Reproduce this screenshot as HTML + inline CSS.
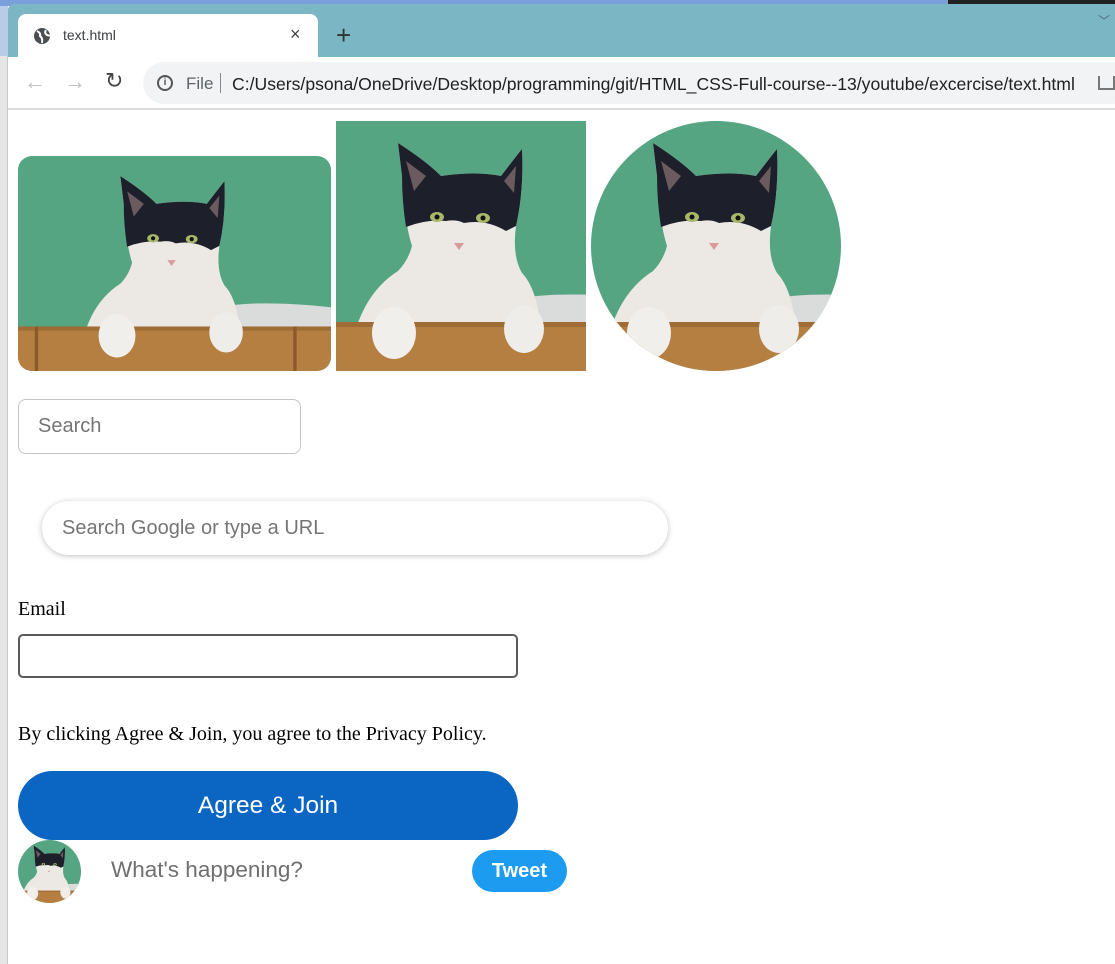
<!DOCTYPE html>
<html><head><meta charset="utf-8"><style>
*{margin:0;padding:0;box-sizing:border-box}
body{width:1115px;height:964px;position:relative;overflow:hidden;background:#fff;font-family:"Liberation Sans",sans-serif}
.a{position:absolute}
</style></head><body>
<svg width="0" height="0" style="position:absolute"><defs>
<g id="cat">
<rect x="-150" y="-50" width="550" height="350" fill="#55a583"/>
<path d="M180 178 Q230 168 330 180 L330 210 L180 210Z" fill="#d9dcda"/>
<path d="M12 250 Q18 178 62 150 Q72 140 76 125 Q68 100 66 55 L62 22 Q90 40 105 55 Q140 50 165 55 Q178 38 186 28 Q188 70 180 105 Q176 135 186 152 Q208 175 206 250Z" fill="#ece8e3"/>
<path d="M62 22 Q90 40 105 55 Q140 50 165 55 Q178 38 186 28 Q188 70 180 105 L170 110 Q150 98 128 102 Q120 98 110 100 Q90 98 70 106 Q66 80 66 55Z" fill="#1d1f2b"/>
<path d="M70 40 L90 55 L78 70Z M180 45 L168 60 L178 72Z" fill="#6b5a5e"/>
<ellipse cx="101" cy="96" rx="7" ry="5" fill="#a9b76a"/><circle cx="101" cy="96" r="2.5" fill="#111"/>
<ellipse cx="147" cy="97" rx="7" ry="5" fill="#a9b76a"/><circle cx="147" cy="97" r="2.5" fill="#111"/>
<path d="M118 122 L128 122 L123 129Z" fill="#d89a9a"/>
<rect x="-150" y="201" width="550" height="99" fill="#b57f42"/>
<rect x="-150" y="201" width="550" height="5" fill="#a06c36"/>
<rect x="-40" y="201" width="4" height="60" fill="#8a5a2a"/>
<rect x="268" y="201" width="4" height="60" fill="#8a5a2a"/>
<ellipse cx="58" cy="212" rx="22" ry="26" fill="#f1efec"/>
<ellipse cx="188" cy="208" rx="20" ry="24" fill="#efedea"/>
</g>
</defs></svg>

<!-- chrome -->
<div class="a" style="left:0;top:0;width:1115px;height:6px;background:#7b9fda"></div>
<div class="a" style="left:948px;top:0;width:167px;height:4px;background:#222"></div>
<div class="a" style="left:0;top:6px;width:8px;height:958px;background:#e6e6e6;border-right:1px solid #c8c8c8"></div>
<div class="a" style="left:0;top:6px;width:8px;height:50px;background:#b9cbe6"></div>
<div class="a" style="left:8px;top:4px;width:1107px;height:53px;background:#7ab6c3;border-top-left-radius:6px"></div>
<div class="a" style="left:18px;top:14px;width:300px;height:44px;background:#fff;border-radius:8px 8px 0 0"></div>
<svg class="a" style="left:33px;top:27px" width="18" height="18" viewBox="0 0 18 18"><circle cx="9" cy="9" r="8" fill="#4a4d52"/><path d="M4 4 Q8 6 7 9 Q10 11 9 16 M13 3 Q11 6 14 8 Q16 9 17 8" stroke="#fff" stroke-width="2" fill="none"/></svg>
<div class="a" style="left:63px;top:27px;font-size:14px;color:#3c4043">text.html</div>
<div class="a" style="left:290px;top:24px;font-size:18px;color:#444">×</div>
<div class="a" style="left:336px;top:20px;font-size:26px;color:#333;font-weight:300">+</div>
<div class="a" style="left:1098px;top:12px;font-size:12px;color:#567">﹀</div>
<div class="a" style="left:8px;top:57px;width:1107px;height:53px;background:#fff;border-bottom:2px solid #dcdcdc"></div>
<div class="a" style="left:24px;top:69px;font-size:22px;color:#bbb">←</div>
<div class="a" style="left:64px;top:69px;font-size:22px;color:#bbb">→</div>
<div class="a" style="left:105px;top:68px;font-size:22px;color:#444">↻</div>
<div class="a" style="left:143px;top:62px;width:990px;height:42px;background:#f1f3f4;border-radius:21px"></div>
<div class="a" style="left:157px;top:75px;width:16px;height:16px;border:2px solid #555;border-radius:50%;font-size:10px;text-align:center;line-height:12px;font-weight:bold;color:#555">i</div>
<div class="a" style="left:186px;top:74px;font-size:17px;color:#5f6368">File</div>
<div class="a" style="left:220px;top:73px;width:1px;height:20px;background:#888"></div>
<div class="a" style="left:232px;top:74px;font-size:17.6px;color:#202124;white-space:nowrap">C:/Users/psona/OneDrive/Desktop/programming/git/HTML_CSS-Full-course--13/youtube/excercise/text.html</div>
<div class="a" style="left:1098px;top:76px;width:17px;height:14px;border:2px solid #777;border-top:none"></div>

<!-- images -->
<svg class="a" style="left:18px;top:156px;border-radius:14px" width="313" height="215" viewBox="-60 -2 373 256" preserveAspectRatio="none"><use href="#cat"/></svg>
<svg class="a" style="left:336px;top:121px" width="250" height="250" viewBox="0 0 250 250"><use href="#cat"/></svg>
<svg class="a" style="left:591px;top:121px;border-radius:50%" width="250" height="250" viewBox="0 0 250 250"><use href="#cat"/></svg>

<div class="a" style="left:18px;top:399px;width:283px;height:55px;border:1px solid #c4c4c4;border-radius:8px"></div>
<div class="a" style="left:38px;top:415px;font-size:20px;color:#757575">Search</div>
<div class="a" style="left:42px;top:501px;width:626px;height:54px;border-radius:27px;box-shadow:0 1px 6px rgba(32,33,36,.28)"></div>
<div class="a" style="left:62px;top:517px;font-size:20px;color:#757575">Search Google or type a URL</div>
<div class="a" style="left:18px;top:598px;font-family:'Liberation Serif',serif;font-size:20px">Email</div>
<div class="a" style="left:18px;top:634px;width:500px;height:44px;border:2px solid #5a5a5a;border-radius:5px"></div>
<div class="a" style="left:18px;top:723px;font-family:'Liberation Serif',serif;font-size:20px;white-space:nowrap">By clicking Agree &amp; Join, you agree to the Privacy Policy.</div>
<div class="a" style="left:18px;top:771px;width:500px;height:69px;background:#0a66c2;border-radius:35px;color:#fff;font-size:24.5px;text-align:center;line-height:69px">Agree &amp; Join</div>
<svg class="a" style="left:18px;top:840px;border-radius:50%" width="63" height="63" viewBox="0 0 250 250"><use href="#cat"/></svg>
<div class="a" style="left:111px;top:857px;font-size:22.5px;color:#6f6f6f">What's happening?</div>
<div class="a" style="left:472px;top:850px;width:95px;height:42px;background:#1d9bf0;border-radius:21px;color:#fff;font-weight:bold;font-size:20px;text-align:center;line-height:42px">Tweet</div>
</body></html>
